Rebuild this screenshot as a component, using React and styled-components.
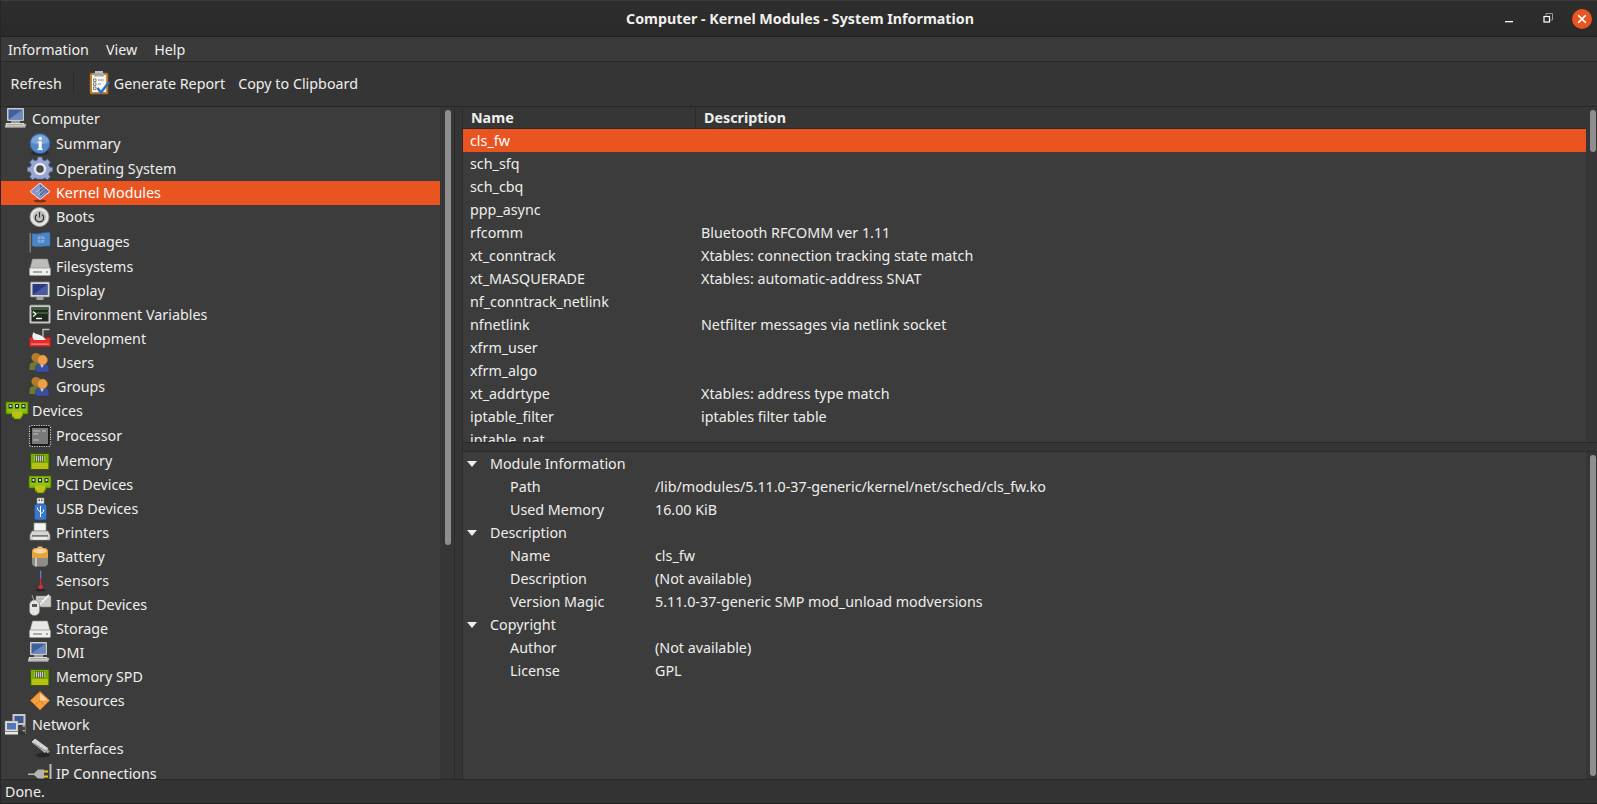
import React from 'react';
import styled, { createGlobalStyle } from 'styled-components';

const Global = createGlobalStyle`
  html, body { margin: 0; padding: 0; background: #222; }
  body { font-family: "Noto Sans", "Open Sans", sans-serif; font-size: 14.4px; color: #eeeeec; }
  * { box-sizing: border-box; }
`;

const Window = styled.div`
  width: 1597px; height: 804px; display: flex; flex-direction: column; overflow: hidden;
  background: #333; border-left: 1px solid #262626; border-bottom: 1px solid #202020;
`;
const TitleBar = styled.header`
  height: 37px; flex: none; position: relative; display: flex; align-items: center; justify-content: center;
  background: linear-gradient(#2e2e2e, #2a2a2a); border-top: 1px solid #3c3c3c; border-bottom: 1px solid #1f1f1f;
`;
const Title = styled.h1`
  margin: 0 0 0 2px; font-size: 14.25px; font-weight: 700; color: #f0f0ee;
`;
const Controls = styled.div`
  position: absolute; right: 5px; top: 8px; display: flex; align-items: center; gap: 20px;
`;
const CtlIcon = styled.svg`
  width: ${p => p.$s || 18}px; height: ${p => p.$s || 18}px; display: block; margin-right: ${p => p.$mr || 0}px;
`;
const MenuBar = styled.nav`
  height: 25px; flex: none; display: flex; align-items: center; gap: 17px; padding-left: 7px;
  background: #3a3a3a; border-bottom: 1px solid #292929;
`;
const MenuItem = styled.span` font-size: 14.3px; color: #eeeeec; `;
const ToolBar = styled.div`
  height: 45px; flex: none; display: flex; align-items: center; padding: 0 0 2px 9.5px;
  background: #353535; border-bottom: 1px solid #262626;
`;
const ToolLabel = styled.span` font-size: 14.3px; color: #eeeeec; margin-left: ${p => p.$ml || 0}px; `;
const ToolSep = styled.span` width: 1px; height: 22px; background: #2b2b2b; margin: 0 14px 0 11px; `;
const ToolIcon = styled.svg` width: 24px; height: 26px; flex: none; display: block; `;
const Main = styled.div` flex: 1; min-height: 0; display: flex; background: #353535; `;
const SidePane = styled.aside` width: 453px; flex: none; display: flex; overflow: hidden; `;
const TreeView = styled.div` width: 439px; flex: none; overflow: hidden; background: #3c3c3c; `;
const TreeRow = styled.div`
  height: ${p => p.$h}px; display: flex; align-items: center; white-space: nowrap;
  padding-left: ${p => (p.$top ? 4 : 27)}px; background: ${p => (p.$sel ? '#e95420' : 'transparent')};
  color: ${p => (p.$sel ? '#ffffff' : '#eeeeec')};
`;
const IconWrap = styled.svg`
  width: 24px; height: 24px; flex: none; display: block; overflow: visible;
`;
const RowLabel = styled.span`
  font-size: 14.3px; margin-left: ${p => (p.$top ? 3 : 4)}px; margin-bottom: ${p => (p.$short ? 2 : 0)}px;
`;
const Track = styled.div`
  width: ${p => p.$w}px; flex: none; background: #363636; padding: 3px 2px 3px ${p => p.$pl}px;
`;
const Thumb = styled.div`
  width: 6px; height: ${p => p.$h}px; background: #8e8e8e; border-radius: 3px;
`;
const Gutter = styled.div`
  width: 9px; flex: none; background: #353535; border-left: 1px solid #2c2c2c; border-right: 1px solid #2c2c2c;
`;
const RightCol = styled.section` flex: 1; min-width: 0; display: flex; flex-direction: column; `;
const ListPane = styled.div` height: 336px; flex: none; display: flex; overflow: hidden; border-bottom: 1px solid #2a2a2a; `;
const ListBody = styled.div` width: 1123px; flex: none; overflow: hidden; background: #3c3c3c; `;
const HeadRow = styled.div`
  height: 22px; display: flex; background: #363636; border-bottom: 1px solid #2a2a2a; font-weight: 700; font-size: 14.3px;
`;
const HeadCell = styled.div`
  width: ${p => p.$w}px; flex: ${p => (p.$w ? 'none' : 1)}; padding-left: 8px; display: flex; align-items: center;
  border-right: ${p => (p.$w ? '1px solid #2c2c2c' : '0')};
`;
const ListRow = styled.div`
  height: 23px; display: flex; align-items: center; font-size: 14.3px; white-space: nowrap;
  background: ${p => (p.$sel ? '#e95420' : 'transparent')}; color: ${p => (p.$sel ? '#fff' : '#eeeeec')};
`;
const NameCell = styled.span` width: 238px; flex: none; padding-left: 7px; `;
const DescCell = styled.span` flex: 1; `;
const Divider = styled.div` height: 9px; flex: none; background: #353535; border-bottom: 1px solid #2a2a2a; `;
const DetailPane = styled.div` flex: 1; min-height: 0; display: flex; overflow: hidden; `;
const DetailBody = styled.div` width: 1123px; flex: none; background: #3c3c3c; `;
const Section = styled.div`
  height: 23px; display: flex; align-items: center; font-size: 14.3px; padding-left: 4px;
`;
const Arrow = styled.svg` width: 10px; height: 6px; flex: none; margin-right: 13px; `;
const KV = styled.div`
  height: 23px; display: flex; align-items: center; font-size: 14.3px; padding-left: 47px; white-space: nowrap;
`;
const Key = styled.span` width: 145px; flex: none; `;
const StatusBar = styled.footer`
  height: 24px; flex: none; display: flex; align-items: center; padding-left: 4px; font-size: 14.3px;
  background: #333; border-top: 1px solid #292929;
`;

/* Icons: dy moves the drawing up inside its 24px box */
const Ic = ({ dy = 0, children }) => <IconWrap viewBox={`0 ${dy} 24 24`}>{children}</IconWrap>;

const ComputerIcon = () => (
  <Ic>
    <rect x="2" y="1" width="17" height="13" rx="1" fill="#c9cbc6" />
    <rect x="3.500" y="2.500" width="14" height="10" fill="#3f5f9e" />
    <path d="M3.500 12.500l14-10v10z" fill="#6a88bd" />
    <rect x="6" y="14" width="9" height="2" fill="#9a9a96" />
    <path d="M1 16h18l1.500 4.500H0z" fill="#dcdcd8" />
    <path d="M2 17.500h16M1.500 19.200h18" stroke="#8b8b88" strokeWidth=".7" />
    <circle cx="20" cy="18" r="1.300" fill="#b5b5b0" />
  </Ic>
);
const InfoIcon = () => (
  <Ic>
    <ellipse cx="12" cy="20.500" rx="9" ry="3" fill="#000" opacity=".3" />
    <circle cx="12" cy="11.500" r="10" fill="#5588c8" stroke="#2f5f9e" strokeWidth="1" />
    <path d="M3 10a9 7 0 0 1 18 0c-4 3-14 3-18 0z" fill="#8ab2e0" opacity=".7" />
    <rect x="10.700" y="9.500" width="3" height="8" fill="#fff" />
    <path d="M9.600 9.500h4v1.200h-4zM9.600 16.600h5v1.400h-5z" fill="#fff" />
    <circle cx="12.200" cy="6.500" r="1.700" fill="#fff" />
  </Ic>
);
const GearIcon = () => (
  <Ic>
    <path
      d="M10 1.500h4l.6 2.900 2.300 1 2.500-1.600 2.800 2.800-1.600 2.500 1 2.300 2.900.6v4l-2.900.6-1 2.300 1.600 2.500-2.800 2.800-2.500-1.600-2.300 1-.6 0h-4l-.6 0-2.300-1-2.500 1.600-2.800-2.800 1.600-2.500-1-2.300-2.900-.6v-4l2.900-.6 1-2.300-1.600-2.500 2.800-2.800 2.500 1.600 2.300-1z"
      transform="translate(0 -1.500)"
      fill="#97a6d0" stroke="#5a6ba0" strokeWidth=".7"
    />
    <circle cx="12" cy="12" r="5" fill="#4a4a4a" stroke="#e6e9f2" strokeWidth="2.400" />
  </Ic>
);
const KernelIcon = () => (
  <Ic>
    <ellipse cx="12" cy="20" rx="6.500" ry="1.500" fill="#000" opacity=".45" />
    <path d="M12 2 22 10.500 12 18.500 2 10.500z" fill="#8298c8" stroke="#e6e8f0" strokeWidth="1" />
    <path d="M12 3.500 20.500 10.500 12 17z" fill="#5a6ea3" />
    <path d="M8 11 15 5.500M10 14 16.500 8M12 16 18 10.500" stroke="#c9d2e8" strokeWidth=".7" />
  </Ic>
);
const PowerIcon = () => (
  <Ic>
    <circle cx="11.500" cy="12" r="9.500" fill="#e4e4e2" stroke="#9c9c9a" strokeWidth="1" />
    <circle cx="11.500" cy="12" r="6.500" fill="#bdbdbb" />
    <path d="M8.800 9.500a4.200 4.200 0 1 0 5.400 0" fill="none" stroke="#333" strokeWidth="1.200" />
    <path d="M11.500 7v5.500" stroke="#333" strokeWidth="1.200" />
  </Ic>
);
const FlagIcon = () => (
  <Ic>
    <rect x="1.500" y="3" width="1.500" height="19.500" fill="#7c7c7a" />
    <path d="M4 3.500c6 1.500 9-1.500 18-1v13.500c-8-.5-11 2-18 0z" fill="#4a86c8" stroke="#2f62a0" strokeWidth=".6" />
    <circle cx="13" cy="9.500" r="4.500" fill="#7fa9dc" stroke="#3e6fae" strokeWidth=".7" />
    <path d="M8.500 9.500h9M13 5v9" stroke="#3e6fae" strokeWidth=".5" />
  </Ic>
);
const DriveIcon = ({ light }) => (
  <Ic>
    <path d="M4.500 4h15l2.500 9.500H2z" fill={light ? '#e8e8e5' : '#bcbcb9'} stroke="#8f8f8c" strokeWidth=".6" />
    <rect x="1.500" y="13" width="21" height="7.500" rx="1" fill="#efefec" stroke="#9a9a97" strokeWidth=".8" />
    <path d="M5 17h9" stroke="#777" strokeWidth="1.200" />
    <circle cx="19" cy="17" r="1" fill="#888" />
  </Ic>
);
const DisplayIcon = () => (
  <Ic>
    <rect x="8.500" y="17" width="7" height="4" fill="#a2a2a0" />
    <rect x="2.500" y="3" width="19" height="15" rx="1" fill="#d4d5d6" stroke="#8a8a88" strokeWidth=".7" />
    <rect x="4.500" y="5" width="15" height="11" fill="#2b3a80" />
    <path d="M4.500 16l15-11v11z" fill="#4a5aa0" />
  </Ic>
);
const TerminalIcon = () => (
  <Ic>
    <rect x="1.500" y="2" width="21" height="18.500" rx="1.500" fill="#c8c9c6" stroke="#7e7e7c" strokeWidth=".7" />
    <rect x="3.500" y="4" width="17" height="14.500" fill="#1e2a1e" />
    <path d="M3.500 4h17v3h-17zM3.500 9h17v2h-17z" fill="#3e5a3a" />
    <path d="M5 8.500 8 11 5 13.500" fill="none" stroke="#fff" strokeWidth="1.100" />
    <path d="M8 15.500h6" stroke="#fff" strokeWidth="1.400" />
  </Ic>
);
const DevIcon = () => (
  <Ic>
    <rect x="1.500" y="10.500" width="21" height="9" fill="#e32b2b" stroke="#a81818" strokeWidth=".5" />
    <rect x="3" y="16.500" width="18" height="1.200" fill="#ff8d8d" />
    <path d="M6 5c0 2 5 2 9 4.500l3 3.500H6.500C3.500 11 4 7 6 5z" fill="#f0f0ee" />
    <path d="M15 9.500V2.500h6.500" fill="none" stroke="#bfbfbc" strokeWidth="1.300" />
  </Ic>
);
const UsersIcon = () => (
  <Ic>
    <circle cx="8" cy="6.500" r="4.500" fill="#b87a28" />
    <path d="M1.500 16c0-4.500 2.500-5 6.500-5s5 2 5 5v3H1.500z" fill="#6d7a34" />
    <path d="M7.500 17c0-3.500 3-4.500 6.500-4.500s7 1 7 4.500v4H7.500z" fill="#3a4f9e" stroke="#2a2f70" strokeWidth=".5" />
    <path d="M12 13h4l-2 4z" fill="#e8e8f0" />
    <circle cx="14.500" cy="9" r="5" fill="#eda04a" stroke="#b36f22" strokeWidth=".5" />
  </Ic>
);
const PciIcon = () => (
  <Ic>
    <path d="M1 3h22v12h-5v2h-2v3H9v-3H7v-2H1z" fill="#7fb800" stroke="#486e00" strokeWidth=".7" />
    <path d="M2.500 4.500h19v8h-19z" fill="#8cc61a" />
    <g fill="#2d2d2d"><rect x="3.500" y="5" width="4" height="4.500" /><rect x="10" y="5" width="4" height="4.500" /><rect x="16.500" y="5" width="4" height="4.500" /></g>
    <g fill="#d9e3c0"><rect x="4.500" y="6" width="2" height="2" /><rect x="11" y="6" width="2" height="2" /><rect x="17.500" y="6" width="2" height="2" /></g>
    <path d="M8 12.500v6M10 12.500v7M12 12.500v7M14 12.500v7M16 12.500v6" stroke="#e8c820" strokeWidth="1.200" />
  </Ic>
);
const CpuIcon = () => (
  <Ic>
    <rect x="1.500" y="1.500" width="21" height="21" rx="2" fill="#1c1c1c" stroke="#d8d8d8" strokeWidth="1.200" strokeDasharray="1.200 1.200" />
    <rect x="4" y="4" width="16" height="16" fill="#7a7a7a" />
    <path d="M5 7h7M14 7h4M5 10h5M5 16h6" stroke="#c0c0c0" strokeWidth="1" />
  </Ic>
);
const MemIcon = () => (
  <Ic>
    <rect x="2.500" y="4.500" width="18.500" height="16" fill="#77ad00" stroke="#35500a" strokeWidth=".8" />
    <rect x="6.500" y="7" width="10" height="5" fill="#c4c8ba" />
    <path d="M7.500 6v7M9.500 6v7M11.500 6v7M13.500 6v7M15.500 6v7" stroke="#3b3b3b" strokeWidth=".7" />
    <path d="M5 14v6M7 14v6M9 14v6M11 14v6M13 14v6M15 14v6M17 14v6M19 14v6" stroke="#e8d020" strokeWidth="1.100" />
  </Ic>
);
const UsbIcon = () => (
  <Ic>
    <rect x="9" y="1" width="7" height="6" fill="#e8e8e6" stroke="#8b8b88" strokeWidth=".5" />
    <rect x="10.500" y="2.500" width="1.500" height="1.500" fill="#555" /><rect x="13" y="2.500" width="1.500" height="1.500" fill="#555" />
    <rect x="6.500" y="7" width="12" height="16" rx="2" fill="#3c78c8" stroke="#1f4f90" strokeWidth=".7" />
    <path d="M12.500 9v11M12.500 15l-3-2.500v-2M12.500 17l3-2.500v-2" fill="none" stroke="#fff" strokeWidth="1" />
  </Ic>
);
const PrinterIcon = () => (
  <Ic dy={1}>
    <rect x="6" y="3" width="12" height="8" fill="#f4f4f2" stroke="#9a9a98" strokeWidth=".7" />
    <path d="M4 11h16l2 4v5H2v-5z" fill="#d6d6d3" stroke="#8b8b88" strokeWidth=".7" />
    <rect x="4" y="15" width="16" height="1.700" fill="#777" />
    <rect x="5" y="17.500" width="14" height="2" fill="#f2f2f0" />
  </Ic>
);
const BatteryIcon = () => (
  <Ic>
    <rect x="9.500" y="1.500" width="5" height="3" rx="1" fill="#e8c078" />
    <rect x="4" y="3" width="16" height="18.500" rx="4" fill="#8c8c88" />
    <path d="M4 7a4 4 0 0 1 4-4h8a4 4 0 0 1 4 4v6H4z" fill="#e8a23c" />
    <ellipse cx="12" cy="6" rx="6.500" ry="2.500" fill="#f4d7a0" />
    <rect x="7" y="13" width="2" height="8.500" fill="#c8c8c4" />
  </Ic>
);
const SensorIcon = () => (
  <Ic>
    <rect x="12" y="1.700" width="1.300" height="8" fill="#5c7fd0" />
    <rect x="12" y="9" width="1.300" height="9" fill="#cc2a2a" />
    <circle cx="12.700" cy="18" r="2.300" fill="#dd2a3a" />
    <ellipse cx="12.700" cy="21" rx="5" ry="1.200" fill="#000" opacity=".35" />
  </Ic>
);
const InputIcon = () => (
  <Ic>
    <path d="M8 3h15v11H13l-5-3z" fill="#c9c9c6" stroke="#8b8b88" strokeWidth=".5" />
    <path d="M12 11 21 2" stroke="#f4f4f2" strokeWidth="1.800" />
    <path d="M10 6h6M10 9h4" stroke="#8b8b88" strokeWidth=".6" />
    <path d="M4 2 6 8" stroke="#9c9c9a" strokeWidth="1" />
    <path d="M1.500 12a5 5 0 0 1 10 0v6a5 4.500 0 0 1-10 0z" fill="#e4e4e1" stroke="#7e7e7c" strokeWidth=".6" />
    <rect x="4" y="11" width="5" height="3" fill="#555" />
  </Ic>
);
const ResIcon = () => (
  <Ic>
    <path d="M12 2.500 21.500 11.500 12 21 2.500 11.500z" fill="#f0a040" stroke="#d8701c" strokeWidth="1" />
    <path d="M12 4v7.500h8z" fill="#fcd49c" />
    <path d="M12 11.500 6.500 16M12 11.500l4.500 5" stroke="#c96a12" strokeWidth=".6" />
  </Ic>
);
const NetworkIcon = () => (
  <Ic>
    <rect x="7.500" y="1" width="13" height="11" fill="#c8c9c6" /><rect x="9.500" y="3" width="9" height="7" fill="#3d5a96" />
    <rect x="17.500" y="12" width="3" height="9" fill="#a0a09c" />
    <rect x="0" y="8" width="13" height="10.500" fill="#dadad7" stroke="#88887f" strokeWidth=".4" /><rect x="2" y="10" width="9" height="6.500" fill="#4f78b8" />
    <rect x="0" y="19" width="13" height="2.500" fill="#e8e8e5" />
    <rect x="14" y="14" width="6" height="3" fill="#444" /><rect x="14" y="18.500" width="6" height="3" fill="#333" />
  </Ic>
);
const InterfacesIcon = () => (
  <Ic>
    <ellipse cx="15" cy="18" rx="7" ry="2.500" fill="#000" opacity=".35" />
    <path d="M4 5 7 2l13 9.500-3 4z" fill="#d4d4d1" stroke="#f0f0ee" strokeWidth=".6" />
    <path d="M5 6 18 14.500" stroke="#8c8c88" strokeWidth="1.400" />
    <rect x="18" y="13" width="3.500" height="3" fill="#a4a4a0" transform="rotate(40 20 14)" />
  </Ic>
);
const PlugIcon = () => (
  <Ic dy={4}>
    <path d="M0 15.500h6l4-4h6v9h-6l-4-3.500H0z" fill="#b4b4b0" />
    <rect x="16" y="12.500" width="4" height="2" fill="#e8c820" /><rect x="16" y="17.500" width="4" height="2" fill="#e8c820" />
    <rect x="21.500" y="6" width="2" height="22" fill="#bdbdb9" />
  </Ic>
);
const ReportIcon = () => (
  <ToolIcon viewBox="0 0 24 26">
    <rect x="2" y="3" width="18" height="21" rx="1" fill="#c08a3c" stroke="#8a5a1c" strokeWidth=".7" />
    <rect x="4" y="5" width="14" height="17" fill="#f6f6f2" />
    <path d="M7 3h8V1H7z" fill="#c0c0bc" /><rect x="6" y="3" width="10" height="3.500" rx=".7" fill="#a8a8a4" />
    <path d="M5.500 9h2.500v2.500H5.500zM5.500 13h2.500v2.500H5.500zM5.500 17h2.500v2.500H5.500z" fill="none" stroke="#555" strokeWidth=".7" />
    <path d="M10 10h6M10 14h3" stroke="#888" strokeWidth=".9" />
    <path d="M9.500 18l3.500 4.500L21 12" fill="none" stroke="#2f6fc0" strokeWidth="2.400" />
  </ToolIcon>
);
const StorageIcon = () => <DriveIcon light />;

const tree = [
  ['Computer', ComputerIcon, 24, 1],
  ['Summary', InfoIcon, 25],
  ['Operating System', GearIcon, 25],
  ['Kernel Modules', KernelIcon, 24, 0, 1],
  ['Boots', PowerIcon, 24],
  ['Languages', FlagIcon, 25],
  ['Filesystems', DriveIcon, 25],
  ['Display', DisplayIcon, 24],
  ['Environment Variables', TerminalIcon, 24],
  ['Development', DevIcon, 24],
  ['Users', UsersIcon, 24],
  ['Groups', UsersIcon, 24],
  ['Devices', PciIcon, 24, 1],
  ['Processor', CpuIcon, 25],
  ['Memory', MemIcon, 25],
  ['PCI Devices', PciIcon, 24],
  ['USB Devices', UsbIcon, 24],
  ['Printers', PrinterIcon, 24],
  ['Battery', BatteryIcon, 24],
  ['Sensors', SensorIcon, 24],
  ['Input Devices', InputIcon, 24],
  ['Storage', StorageIcon, 24],
  ['DMI', ComputerIcon, 24],
  ['Memory SPD', MemIcon, 24],
  ['Resources', ResIcon, 24],
  ['Network', NetworkIcon, 24, 1],
  ['Interfaces', InterfacesIcon, 24],
  ['IP Connections', PlugIcon, 25],
];

const modules = [
  ['cls_fw', ''], ['sch_sfq', ''], ['sch_cbq', ''], ['ppp_async', ''],
  ['rfcomm', 'Bluetooth RFCOMM ver 1.11'],
  ['xt_conntrack', 'Xtables: connection tracking state match'],
  ['xt_MASQUERADE', 'Xtables: automatic-address SNAT'],
  ['nf_conntrack_netlink', ''],
  ['nfnetlink', 'Netfilter messages via netlink socket'],
  ['xfrm_user', ''], ['xfrm_algo', ''],
  ['xt_addrtype', 'Xtables: address type match'],
  ['iptable_filter', 'iptables filter table'],
  ['iptable_nat', ''],
];

const details = [
  ['Module Information', [['Path', '/lib/modules/5.11.0-37-generic/kernel/net/sched/cls_fw.ko'], ['Used Memory', '16.00 KiB']]],
  ['Description', [['Name', 'cls_fw'], ['Description', '(Not available)'], ['Version Magic', '5.11.0-37-generic SMP mod_unload modversions']]],
  ['Copyright', [['Author', '(Not available)'], ['License', 'GPL']]],
];

export default function App() {
  return (
    <>
      <Global />
      <Window>
        <TitleBar>
          <Title>Computer - Kernel Modules - System Information</Title>
          <Controls>
            <CtlIcon viewBox="0 0 18 18"><rect x="5" y="11" width="8" height="1.300" fill="#fff" /></CtlIcon>
            <CtlIcon viewBox="0 0 18 18" $mr={-4}>
              <path d="M8 5.500V3.500h6.500V10H12.500" fill="none" stroke="#9a9a9a" strokeWidth="1" />
              <rect x="6" y="6.500" width="5.500" height="5.500" fill="none" stroke="#fff" strokeWidth="1.200" />
            </CtlIcon>
            <CtlIcon viewBox="0 0 18 18" $s={20}>
              <circle cx="9" cy="9" r="9" fill="#e95420" />
              <path d="M5.500 5.500l7 7M12.500 5.500l-7 7" stroke="#fff" strokeWidth="1.400" />
            </CtlIcon>
          </Controls>
        </TitleBar>
        <MenuBar>
          <MenuItem>Information</MenuItem>
          <MenuItem>View</MenuItem>
          <MenuItem>Help</MenuItem>
        </MenuBar>
        <ToolBar>
          <ToolLabel>Refresh</ToolLabel>
          <ToolSep />
          <ReportIcon />
          <ToolLabel $ml={2}>Generate Report</ToolLabel>
          <ToolLabel $ml={13}>Copy to Clipboard</ToolLabel>
        </ToolBar>
        <Main>
          <SidePane>
            <TreeView>
              {tree.map(([label, Icon, h, top, sel]) => (
                <TreeRow key={label + (top || '')} $h={h} $top={!!top} $sel={!!sel}>
                  <Icon />
                  <RowLabel $top={!!top} $short={h === 24}>{label}</RowLabel>
                </TreeRow>
              ))}
            </TreeView>
            <Track $w={14} $pl={5}><Thumb $h={435} /></Track>
          </SidePane>
          <Gutter />
          <RightCol>
            <ListPane>
              <ListBody>
                <HeadRow>
                  <HeadCell $w={233}>Name</HeadCell>
                  <HeadCell>Description</HeadCell>
                </HeadRow>
                {modules.map(([n, d], i) => (
                  <ListRow key={n} $sel={i === 0}>
                    <NameCell>{n}</NameCell>
                    <DescCell>{d}</DescCell>
                  </ListRow>
                ))}
              </ListBody>
              <Track $w={11} $pl={4}><Thumb $h={42} /></Track>
            </ListPane>
            <Divider />
            <DetailPane>
              <DetailBody>
                {details.map(([title, rows]) => (
                  <React.Fragment key={title}>
                    <Section>
                      <Arrow viewBox="0 0 10 6"><path d="M0 0h10L5 6z" fill="#eeeeec" /></Arrow>
                      {title}
                    </Section>
                    {rows.map(([k, v]) => (
                      <KV key={k}><Key>{k}</Key><span>{v}</span></KV>
                    ))}
                  </React.Fragment>
                ))}
              </DetailBody>
              <Track $w={11} $pl={4}><Thumb $h={321} /></Track>
            </DetailPane>
          </RightCol>
        </Main>
        <StatusBar>Done.</StatusBar>
      </Window>
    </>
  );
}
